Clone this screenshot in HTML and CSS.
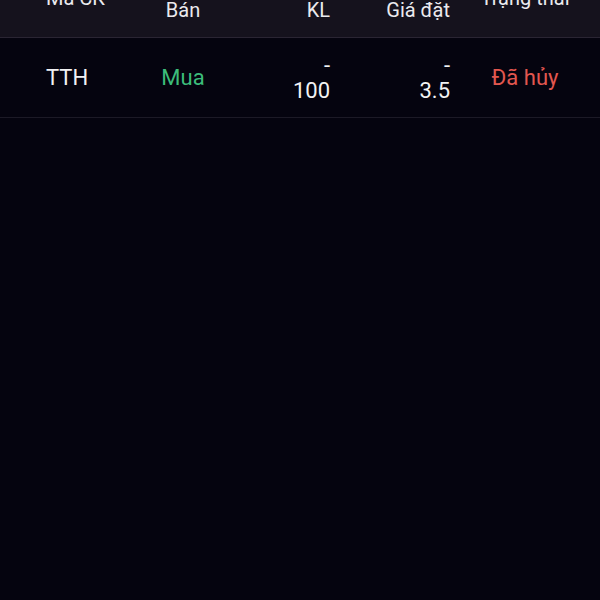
FILE: index.html
```html
<!DOCTYPE html>
<html lang="vi">
<head>
  <meta charset="UTF-8" />
  <meta name="viewport" content="width=device-width, initial-scale=1.0" />
  <title>Sổ lệnh</title>
  <link rel="stylesheet" href="styles.css">
</head>
<body>

  <div class="order-table">
    <!-- header is scrolled partly out of view -->
    <div class="table-head">
      <div class="cell col-code">Mã CK</div>
      <div class="cell col-side">Mua/<br>Bán</div>
      <div class="cell col-vol">KL khớp/<br>KL</div>
      <div class="cell col-price">Giá khớp/<br>Giá đặt</div>
      <div class="cell col-status">Trạng thái</div>
    </div>

    <div class="table-row">
      <div class="cell col-code">TTH</div>
      <div class="cell col-side buy">Mua</div>
      <div class="cell col-vol">-<br>100</div>
      <div class="cell col-price">-<br>3.5</div>
      <div class="cell col-status cancelled">Đã hủy</div>
    </div>
  </div>

</body>
</html>
```

FILE: styles.css
```css
body {
  margin: 0;
  background-color: #05040f;
  font-family: Roboto, "Noto Sans", sans-serif;
  color: #f2f2f4;
  overflow: hidden;
}

.order-table {
  margin-top: -41px;
}

.table-head,
.table-row {
  display: grid;
  grid-template-columns: 138px 90px 102px 120px 150px;
  align-items: center;
}

.table-head {
  height: 78px;
  font-size: 20px;
  background-color: #15121d;
  border-bottom: 1px solid #2a2533;
  color: #ebeaee;
}

.table-row {
  height: 79px;
  font-size: 22px;
  border-bottom: 1px solid #1c1a26;
}

.cell {
  line-height: 25px;
}

.col-code {
  padding-left: 46px;
  text-align: left;
}

.col-side {
  text-align: center;
}

.col-vol,
.col-price {
  text-align: right;
}

.col-status {
  text-align: center;
}

.buy {
  color: #3cbc7a;
}

.cancelled {
  color: #e2574f;
}
```
